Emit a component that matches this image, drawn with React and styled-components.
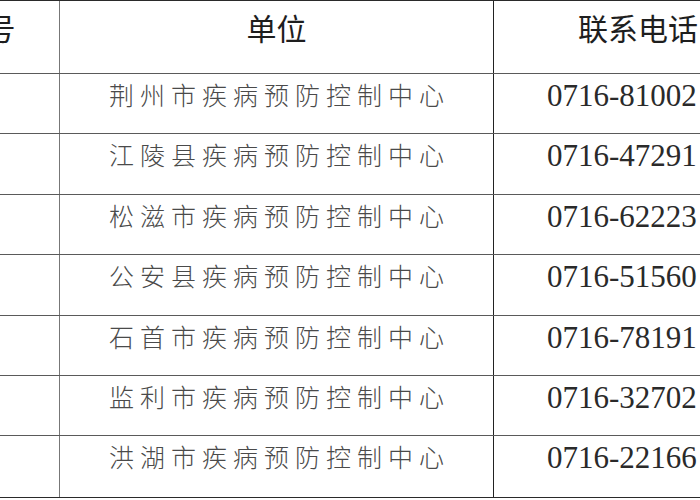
import React from 'react';
import styled, { createGlobalStyle } from 'styled-components';

const GlobalStyle = createGlobalStyle`
  html, body {
    margin: 0;
    padding: 0;
    background: #ffffff;
    overflow: hidden;
  }
`;

const Page = styled.div`
  width: 700px;
  height: 500px;
  overflow: hidden;
  background: #fff;
`;

const Table = styled.div`
  margin-left: -88px;
  width: 870px;
  border-top: 1.5px solid #2a2a2a;
  border-bottom: 1.5px solid #2a2a2a;
`;

const Row = styled.div`
  display: grid;
  grid-template-columns: 148px 434px 288px;
  height: ${(p) => (p.$head ? '73px' : '60.4px')};
  border-bottom: ${(p) => (p.$last ? 'none' : '1.5px solid #5a5a5a')};
  box-sizing: border-box;
`;

const Cell = styled.div`
  box-sizing: border-box;
  border-right: ${(p) => p.$line || 'none'};
  padding-top: ${(p) => p.$top || '0px'};
  text-align: center;
  overflow: hidden;
  white-space: nowrap;
`;

const HeadText = styled.span`
  font-family: "Noto Sans CJK SC", "Noto Sans", sans-serif;
  font-size: 30px;
  line-height: 1;
  color: #1e1e1e;
`;

const UnitText = styled.span`
  font-family: "Noto Sans CJK SC", sans-serif;
  font-weight: 300;
  font-size: 25px;
  letter-spacing: 6px;
  line-height: 1;
  color: #4a4a4a;
  margin-right: -6px;
`;

const Phone = styled.span`
  font-family: "Liberation Serif", "Times New Roman", serif;
  font-size: 31px;
  line-height: 1;
  color: #2a2a2a;
  display: block;
  text-align: left;
  padding-left: 53px;
`;

const IndexText = styled.span`
  font-family: "Liberation Serif", serif;
  font-size: 28px;
  line-height: 1;
  color: #2a2a2a;
`;

const rows = [
  { unit: '荆州市疾病预防控制中心', phone: '0716-81002' },
  { unit: '江陵县疾病预防控制中心', phone: '0716-47291' },
  { unit: '松滋市疾病预防控制中心', phone: '0716-62223' },
  { unit: '公安县疾病预防控制中心', phone: '0716-51560' },
  { unit: '石首市疾病预防控制中心', phone: '0716-78191' },
  { unit: '监利市疾病预防控制中心', phone: '0716-32702' },
  { unit: '洪湖市疾病预防控制中心', phone: '0716-22166' },
];

const App = () => (
  <Page>
    <GlobalStyle />
    <Table>
      <Row $head>
        <Cell $line="1.5px solid #777" $top="11px">
          <HeadText>序号</HeadText>
        </Cell>
        <Cell $line="1.5px solid #222" $top="11px">
          <HeadText>单位</HeadText>
        </Cell>
        <Cell $top="11px">
          <HeadText>联系电话</HeadText>
        </Cell>
      </Row>
      {rows.map((r, i) => (
        <Row key={r.unit} $last={i === rows.length - 1}>
          <Cell $line="1.5px solid #777" $top="8px">
            <IndexText>{i + 1}</IndexText>
          </Cell>
          <Cell $line="1.5px solid #222" $top="8px">
            <UnitText>{r.unit}</UnitText>
          </Cell>
          <Cell $top="6px">
            <Phone>{r.phone}</Phone>
          </Cell>
        </Row>
      ))}
    </Table>
  </Page>
);

export default App;
